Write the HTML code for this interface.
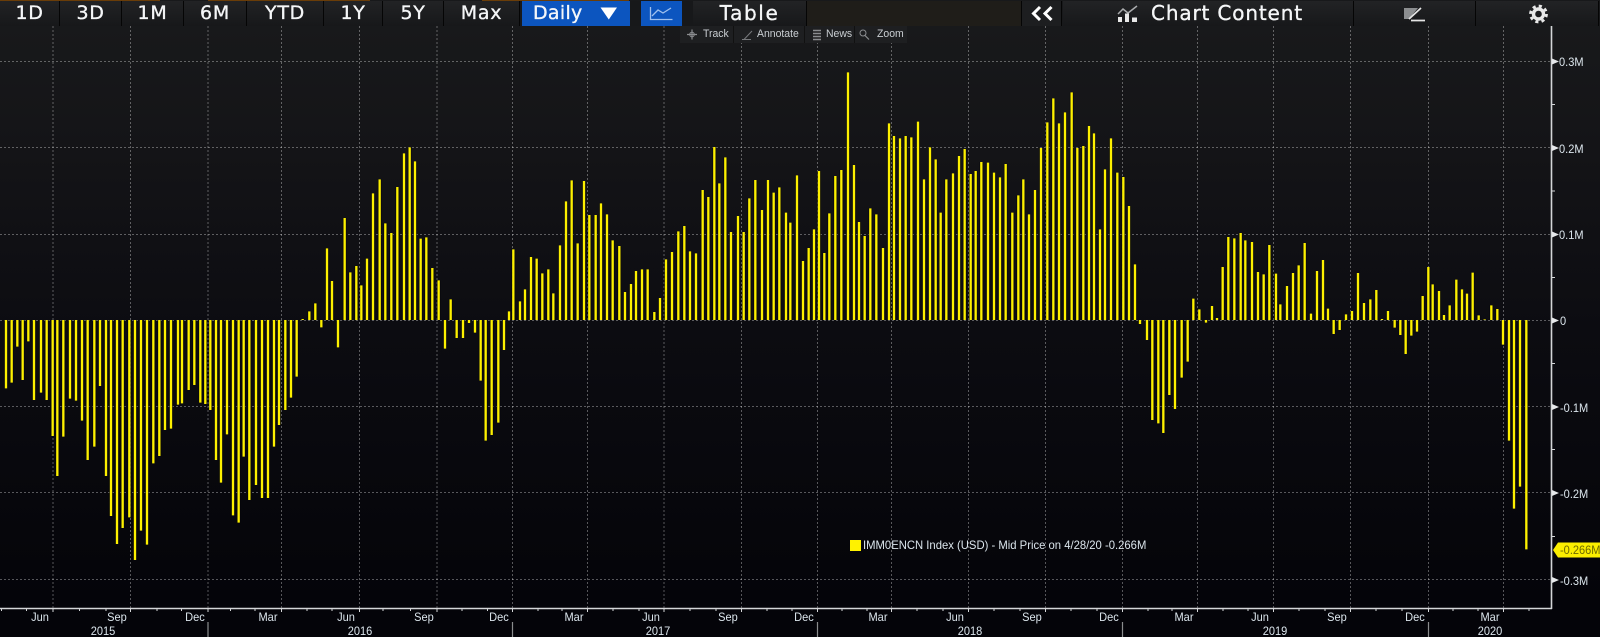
<!DOCTYPE html>
<html><head><meta charset="utf-8"><title>IMM0ENCN Index</title>
<style>
html,body{margin:0;padding:0;background:#040409}
#p{position:relative;width:1600px;height:637px;overflow:hidden;background:linear-gradient(#18191b 26px,#141417 150px,#0c0c11 330px,#040409 600px);font-family:"Liberation Sans",sans-serif}
.t{position:absolute;top:1px;height:25px;background:linear-gradient(#222325,#17181a);color:#f4f6f8;font:19px/25px "DejaVu Sans",sans-serif;letter-spacing:.7px;text-align:center;box-sizing:border-box;border-right:1px solid #050505;-webkit-text-stroke:.3px #fff}
.s{position:absolute;top:0;height:1px;background:#6a3d08}
.tb{position:absolute;top:26px;left:680px;width:227px;height:17px;background:#1e1f21}
.tb i{position:absolute;top:0;width:1px;height:17px;background:#111}
.tb span{position:absolute;top:0;font:11px/17px "Liberation Sans",sans-serif;color:#c9ced2;white-space:nowrap;transform:scaleX(.95);transform-origin:0 0}
.y,.m,.yr{position:absolute;font:12px/13px "Liberation Sans",sans-serif;color:#dbe5ec;white-space:nowrap}
.y{left:1560px;transform:scaleX(.92);transform-origin:0 0}
.m,.yr{width:60px;text-align:center;transform:scaleX(.92)}
.m{top:611px}.yr{top:625px}
svg{position:absolute;left:0;top:0}
</style></head><body><div id="p">

<svg width="1600" height="637" fill="none">
<g stroke="#fff" stroke-opacity=".33" stroke-width="1" stroke-dasharray="2 2">
<path d="M53 26V608M130.5 26V608M208 26V608M281.5 26V608M359.5 26V608M437 26V608M512.5 26V608M587.5 26V608M664 26V608M741.5 26V608M817.5 26V608M891.5 26V608M968.5 26V608M1045.5 26V608M1122.5 26V608M1197.5 26V608M1273.5 26V608M1350.5 26V608M1428.5 26V608M1503.5 26V608"/>
<path d="M0 61.5H1551M0 147.5H1551M0 234.5H1551M0 320.5H1551M0 406.5H1551M0 492.5H1551M0 579.5H1551"/>
</g>
<use href="#bars" stroke="#04040a" stroke-width="11" stroke-opacity=".75"/>
<use href="#bars" stroke="#fdf000" stroke-width="7"/>
<defs><g id="bars">
<path transform="translate(0 300) scale(.33333)" d="M18 60V265M35 60V248M52 60V140M68 60V240M85 60V124M102 60V300M123 60V278M140 60V300M158 60V408M172 60V528M190 60V410M210 60V296M228 60V302M246 60V362M263 60V480M283 60V440M300 60V258M318 60V528M333 60V648M351 60V732M368 60V684M388 60V652M405 60V780M423 60V692M441 60V734M460 60V490M478 60V468M495 60V390M513 60V386M534 60V314M546 60V310M566 60V270M583 60V255M601 60V308M616 60V312M631 60V330M648 60V480M663 60V548M681 60V403M699 60V646M716 60V668M731 60V470M748 60V600M768 60V555M786 60V594M804 60V594M822 60V440M837 60V375M856 60V330M873 60V293M890 60V230"/>
<path transform="translate(290 130) scale(.33333)" d="M38 570V567M58 570V544M76 570V520M94 570V592M111 570V355M126 570V453M144 570V652M164 570V264M181 570V427M199 570V408M214 570V466M231 570V386M249 570V190M269 570V148M286 570V280M304 570V309M322 570V171M342 570V70M359 570V52M375 570V94M392 570V326M409 570V322M427 570V414M446 570V451M465 570V656M482 570V508M500 570V624M519 570V624M537 570V579M555 570V608M572 570V752M587 570V932M605 570V915M625 570V878M642 570V660M657 570V544M670 570V358M690 570V514M705 570V478M723 570V381M740 570V386M757 570V430M775 570V418M790 570V490M810 570V346M828 570V214M845 570V151M863 570V340M882 570V153M898 570V255"/>
<path transform="translate(580 60) scale(.33333)" d="M47 780V465M63 780V430M81 780V463M98 780V541M118 780V558M135 780V696M153 780V672M168 780V633M186 780V628M203 780V628M223 780V756M240 780V714M258 780V598M276 780V576M295 780V514M313 780V498M330 780V574M348 780V580M368 780V390M385 780V411M403 780V261M418 780V370M436 780V292M453 780V516M474 780V468M491 780V516M508 780V415M526 780V360M546 780V450M564 780V360M581 780V398M598 780V382M618 780V458M631 780V488M651 780V346M669 780V603M686 780V564M702 780V508M717 780V333M733 780V579M748 780V460M766 780V348M784 780V330M804 780V37M822 780V315M837 780V486M854 780V528M871 780V445M889 780V463"/>
<path transform="translate(860 80) scale(.33333)" d="M69 720V504M87 720V130M102 720V168M120 720V175M137 720V168M154 720V172M174 720V125M192 720V298M210 720V202M227 720V238M242 720V398M259 720V298M279 720V280M297 720V228M314 720V207M332 720V282M347 720V273M364 720V246M384 720V248M402 720V278M420 720V292M437 720V252M457 720V398M475 720V346M490 720V298M507 720V403M525 720V330M543 720V204M562 720V127M580 720V55M597 720V130M615 720V97M635 720V37M652 720V204M670 720V198M687 720V138M702 720V160M720 720V448M735 720V268M753 720V175M772 720V278M790 720V291M807 720V378M825 720V553"/>
<path transform="translate(1110 220) scale(.33333)" d="M90 300V312M111 300V360M127 300V600M145 300V610M160 300V639M178 300V525M195 300V567M215 300V473M233 300V425M250 300V236M268 300V268M288 300V308M306 300V258M321 300V294M338 300V141M355 300V51M373 300V55M392 300V39M406 300V61M426 300V66M444 300V156M461 300V163M478 300V75M498 300V161M511 300V253M531 300V198M549 300V159M566 300V136M584 300V69M603 300V281M621 300V153M639 300V120M654 300V266M671 300V342M689 300V330M708 300V283M726 300V273M744 300V159M762 300V249M781 300V238M799 300V210M816 300V297M834 300V273M854 300V323M871 300V345M887 300V402"/>
<path transform="translate(1380 280) scale(.33333)" d="M94 120V167M111 120V155M128 120V48M145 120V-39M158 120V13M177 120V33M192 120V105M209 120V76M229 120V-1M246 120V28M261 120V41M278 120V-22M296 120V106M314 120V118M334 120V76M352 120V87M369 120V194M387 120V482M402 120V686M420 120V620M439 120V808"/>
</g></defs>
<!-- axes -->
<path d="M1551.5 26V609M0 608.5H1552" stroke="#d4d6d8" stroke-width="1.6"/>
<path d="M53 609V612M130.5 609V612M208 609V612M281.5 609V612M359.5 609V612M437 609V612M512.5 609V612M587.5 609V612M664 609V612M741.5 609V612M817.5 609V612M891.5 609V612M968.5 609V612M1045.5 609V612M1122.5 609V612M1197.5 609V612M1273.5 609V612M1350.5 609V612M1428.5 609V612M1503.5 609V612M1.5 609V611M26.5 609V611M79.5 609V611M106 609V611M157 609V611M181.5 609V611M230.5 609V611M255 609V611M307 609V611M332 609V611M383 609V611M410.5 609V611M462 609V611M487.5 609V611M538 609V611M562 609V611M613 609V611M639 609V611M690 609V611M716 609V611M767 609V611M792 609V611M842 609V611M867 609V611M917 609V611M943 609V611M994 609V611M1020 609V611M1071 609V611M1097 609V611M1148 609V611M1172 609V611M1223 609V611M1248 609V611M1299 609V611M1325 609V611M1376 609V611M1402 609V611M1453 609V611M1478 609V611M1529 609V611" stroke="#d4d6d8"/>
<path d="M208 622V637M512.5 622V637M817.5 622V637M1122.5 622V637M1428.5 622V637" stroke="#8a8c8e" stroke-width="1.2"/>
<path d="M1552 104.5h3M1552 191h3M1552 277.5h3M1552 363.5h3M1552 449.5h3M1552 536.5h3" stroke="#d4d6d8"/>
<path fill="#e6e8ea" d="M1552 58.5l7 3-7 3zM1552 145l7 3-7 3zM1552 231.5l7 3-7 3zM1552 317.5l7 3-7 3zM1552 404l7 3-7 3zM1552 490l7 3-7 3zM1552 577l7 3-7 3z"/>
<path fill="#fbee00" d="M1553 550l5-7.500H1600V557.500H1558z"/>
</svg>

<div class="s" style="left:0;width:160px"></div><div class="s" style="left:208px;width:162px"></div><div class="s" style="left:482px;width:147px"></div>

<div class="t" style="left:0;width:60px">1D</div>
<div class="t" style="left:60px;width:62px">3D</div>
<div class="t" style="left:122px;width:62px">1M</div>
<div class="t" style="left:184px;width:63px">6M</div>
<div class="t" style="left:247px;width:77px">YTD</div>
<div class="t" style="left:324px;width:59px">1Y</div>
<div class="t" style="left:383px;width:61px">5Y</div>
<div class="t" style="left:444px;width:76px">Max</div>
<div class="t" style="left:522px;width:108px;background:#0c55bf;border:0;text-align:left;padding-left:11px;letter-spacing:.3px">Daily</div>
<div class="t" style="left:630px;width:11px;background:#17181a;border:0"></div>
<div class="t" style="left:641px;width:41px;background:#0c55bf;border:0"></div>
<div class="t" style="left:682px;width:11px;background:#17181a;border:0"></div>
<div class="t" style="left:693px;width:114px;font-size:20px;letter-spacing:1.6px">Table</div>
<div class="t" style="left:807px;width:215px;background:#1f1d19"></div>
<div class="t" style="left:1022px;width:40px;background:#1d1e20"></div>
<div class="t" style="left:1063px;width:291px;font-size:20px;letter-spacing:.85px;text-align:left;padding-left:88px">Chart Content</div>
<div class="t" style="left:1354px;width:122px"></div>
<div class="t" style="left:1476px;width:123px"></div>

<svg width="1600" height="27" fill="none">
<path fill="#fff" d="M600.500 7.500H617L608.800 19.500z"/>
<path d="M650.500 7V19.500H672.500M652 16l6-6 5 3 8-5" stroke="#9fc0ee" stroke-width="1.300"/>
<path d="M1040 7l-6.500 6.500 6.500 6.500M1051.500 7l-6.500 6.500 6.500 6.500" stroke="#fff" stroke-width="3"/>
<path d="M1118 14l5-5 5 4 9-7" stroke="#a9abad" stroke-width="1.500"/>
<path fill="#e8e8e8" d="M1118 17h4v5h-4zM1125 13.500h4v8.500h-4zM1132 17.500h5v4.500h-5z"/>
<path fill="#8c8e90" d="M1404 8h14l-5 6-3 5h-6z"/>
<path d="M1409 19l12-11M1411 20.500h14" stroke="#e4e4e4" stroke-width="1.700"/>
<circle cx="1538.500" cy="14" r="5" stroke="#e8e8e8" stroke-width="3.400"/>
<circle cx="1538.500" cy="14" r="8" stroke="#e8e8e8" stroke-width="2.800" stroke-dasharray="3.140 3.140"/>
</svg>

<div class="tb"><i style="left:53px"></i><i style="left:124px"></i><i style="left:174px"></i>
<svg width="227" height="17" fill="none"><path d="M12 3.500V13.500M7 8.500H17" stroke="#8b8d90" stroke-width="1.200"/><circle cx="12" cy="8.500" r="2.300" stroke="#8b8d90"/><path d="M64 13.500L72 5M62 13.500h9" stroke="#77797c"/><path d="M133 4.500h8M133 7.500h8M133 10.500h8M133 13.500h8" stroke="#8b8d90" stroke-width="1.500"/><circle cx="183" cy="7" r="3" stroke="#8b8d90"/><path d="M185 9.500l4 4" stroke="#8b8d90" stroke-width="1.200"/></svg>
<span style="left:23px">Track</span><span style="left:77px">Annotate</span><span style="left:146px">News</span><span style="left:197px">Zoom</span></div>

<div class="y" style="left:1559px;top:56px">0.3M</div>
<div class="y" style="left:1559px;top:143px">0.2M</div>
<div class="y" style="left:1559px;top:229px">0.1M</div>
<div class="y" style="top:315px">0</div>
<div class="y" style="top:402px">-0.1M</div>
<div class="y" style="top:488px">-0.2M</div>
<div class="y" style="top:575px">-0.3M</div>
<div class="y" style="top:544px;color:#6e6a00">-0.266M</div>

<div style="position:absolute;left:850px;top:540px;width:11px;height:11px;background:#fff200"></div>
<div class="y" style="left:863px;top:539px;width:300px;transform:scaleX(.94)">IMM0ENCN Index (USD) - Mid Price on 4/28/20 -0.266M</div>

<div class="m" style="left:9.500px">Jun</div><div class="m" style="left:87px">Sep</div><div class="m" style="left:164.500px">Dec</div><div class="m" style="left:238px">Mar</div><div class="m" style="left:316px">Jun</div><div class="m" style="left:393.500px">Sep</div><div class="m" style="left:469px">Dec</div><div class="m" style="left:544px">Mar</div><div class="m" style="left:620.500px">Jun</div><div class="m" style="left:698px">Sep</div><div class="m" style="left:774px">Dec</div><div class="m" style="left:848px">Mar</div><div class="m" style="left:925px">Jun</div><div class="m" style="left:1002px">Sep</div><div class="m" style="left:1079px">Dec</div><div class="m" style="left:1154px">Mar</div><div class="m" style="left:1230px">Jun</div><div class="m" style="left:1307px">Sep</div><div class="m" style="left:1385px">Dec</div><div class="m" style="left:1460px">Mar</div>
<div class="yr" style="left:73px">2015</div><div class="yr" style="left:330px">2016</div><div class="yr" style="left:628px">2017</div><div class="yr" style="left:940px">2018</div><div class="yr" style="left:1245px">2019</div><div class="yr" style="left:1460px">2020</div>

</div></body></html>
